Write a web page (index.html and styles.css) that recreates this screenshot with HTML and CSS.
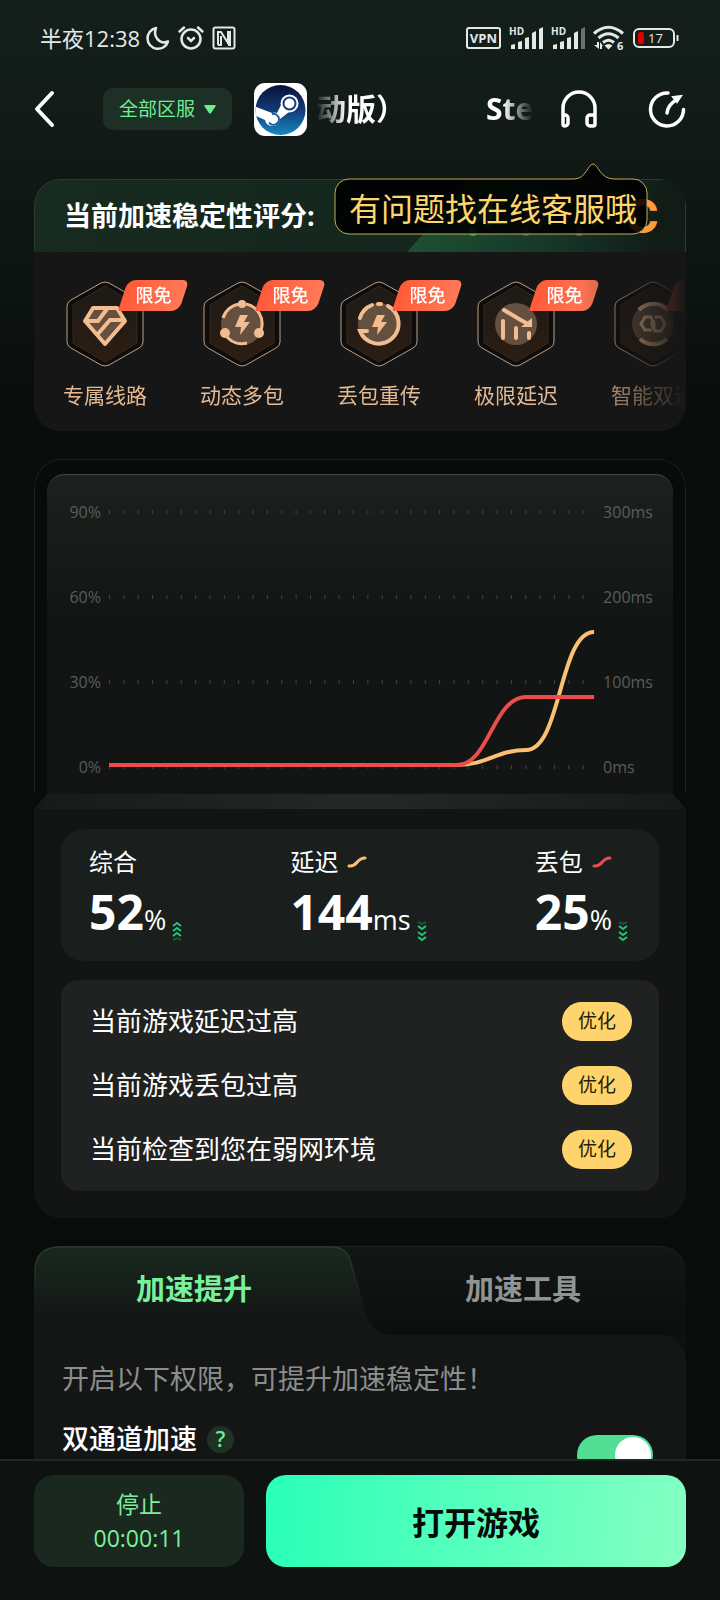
FILE: index.html
```html
<!DOCTYPE html>
<html lang="zh-CN">

<head>
    <meta charset="UTF-8">
    <meta name="viewport" content="width=device-width, initial-scale=1.0">
    <title>游戏加速</title>
    <link rel="stylesheet" href="styles.css">
</head>

<body>
    <div class="statusbar">
        <div class="status-left">
            <span class="clock">半夜12:38</span>
            <svg width="24" height="24" viewBox="0 0 24 24" fill="none" stroke="#e4e8e6" stroke-width="2.500" stroke-linejoin="round"><path d="M10 2A10.500 10.500 0 1 0 22 15.500C14 19 6.500 11 10 2Z"/></svg>
            <svg class="alarm" width="26" height="24" viewBox="0 0 26 24" fill="none" stroke="#e4e8e6" stroke-width="2.500" stroke-linecap="round"><circle cx="13" cy="13" r="9.500"/><path d="M1.500 5.500 6 1.500M24.500 5.500 20 1.500M10 12l3 3 3-3"/></svg>
            <svg width="24" height="24" viewBox="0 0 24 24" fill="none" stroke="#e4e8e6" stroke-width="2"><rect x="1.500" y="1.500" width="21" height="21" rx="2"/><path d="M6 19V6h3l7 11V6h2v13h-2M6 19h3V10"/></svg>
        </div>
        <div class="status-right">
            <span class="vpn">VPN</span>
            <svg width="34" height="24" viewBox="0 0 34 24" fill="#e4e8e6"><text x="0" y="9" class="hd">HD</text><path d="M2 23v-4l4-1v5zM9 23v-7l4-1v8zM16 23V12l4-1v12zM23 23V7l4-2v18zM30 23V3l4-2v22z"/></svg>
            <svg width="34" height="24" viewBox="0 0 34 24" fill="#e4e8e6"><text x="0" y="9" class="hd">HD</text><path d="M2 23v-4l4-1v5zM9 23v-7l4-1v8zM16 23V12l4-1v12zM23 23V7l4-2v18z"/><path fill="#6a706d" d="M30 23V3l4-2v22z"/></svg>
            <svg width="32" height="26" viewBox="0 0 32 26" fill="none" stroke="#e4e8e6" stroke-width="3"><path d="M1 8.500Q15.500-4 30 8.500M5.500 13Q15.500 4.500 25.500 13M10 17.500Q15.500 13 21 17.500"/><path fill="#e4e8e6" stroke="none" d="M11.500 20.500q4-3 8 0l-4 4zM1 20h3v-3h2v7zM7 17l3 4H9v3H7z"/><text x="24" y="25" class="wifi6">6</text></svg>
            <svg width="46" height="22" viewBox="0 0 46 22" fill="none"><rect x="1" y="2" width="40" height="18" rx="5" stroke="#e4e8e6" stroke-width="2"/><rect x="5" y="5" width="6" height="12" rx="2" fill="#e00000"/><path d="M44.500 8v6" stroke="#e4e8e6" stroke-width="2"/><text x="15" y="16" class="batt">17</text></svg>
        </div>
    </div>

    <header class="header">
        <button class="icon-btn" type="button" aria-label="返回">
            <svg width="20" height="38" viewBox="0 0 20 38" fill="none" stroke="#fff" stroke-width="4" stroke-linecap="round" stroke-linejoin="round"><path d="M18 3 3 19l15 16"/></svg>
        </button>
        <button class="region" type="button">全部区服
            <svg width="12" height="9" viewBox="0 0 12 9" fill="#6bef92"><path d="M1 0h10q1 0 .500 1.500L7 8q-1 1-2 0L.500 1.500Q0 0 1 0Z"/></svg>
        </button>
        <svg class="game-icon" width="53" height="53" viewBox="0 0 53 53">
            <defs>
                <linearGradient id="steam" x1="0" y1="0" x2="0" y2="1">
                    <stop offset="0" stop-color="#0b1038"/>
                    <stop offset=".5" stop-color="#123a78"/>
                    <stop offset="1" stop-color="#1689bd"/>
                </linearGradient>
                <clipPath id="disc"><circle cx="26.500" cy="27" r="25"/></clipPath>
            </defs>
            <rect width="53" height="53" rx="11" fill="#fff"/>
            <circle cx="26.500" cy="27" r="25" fill="url(#steam)"/>
            <g clip-path="url(#disc)">
                <path d="M0 23 18 30Q21 29 23 30L27 22Q27 12 35 12A8.500 8.500 0 1 1 35 29L26 36Q25 43 19 43Q12 43 11 37L0 32Z" fill="#fff"/>
            </g>
            <circle cx="35.500" cy="20.500" r="9" fill="#fff"/>
            <circle cx="35.500" cy="20.500" r="6" fill="#fff" stroke="#173d76" stroke-width="2"/>
            <path d="M15 39.500A5.500 5.500 0 1 0 18 31" fill="none" stroke="#195c98" stroke-width="2"/>
        </svg>
        <div class="marquee"><span>动版）</span><span>Ste</span></div>
        <button class="icon-btn" type="button" aria-label="在线客服">
            <svg width="38" height="38" viewBox="0 0 38 38" fill="none" stroke="#fff" stroke-width="3.500" stroke-linejoin="round"><path d="M3 34V18a16 16 0 0 1 32 0v16a2 2 0 0 1-2 2h-3a3 3 0 0 1-3-3v-5a3 3 0 0 1 3-3h5M3 25h2a3 3 0 0 1 3 3v5a3 3 0 0 1-3 3H5a2 2 0 0 1-2-2"/></svg>
        </button>
        <button class="icon-btn" type="button" aria-label="测速">
            <svg width="38" height="38" viewBox="0 0 38 38" fill="none" stroke="#fff" stroke-width="3.500" stroke-linecap="round"><path d="M20 3A16.500 16.500 0 1 0 35.500 19.500M19 23q1-8 9-13"/><path fill="#fff" stroke-width="2" d="m25 7 8-1-4 6z"/></svg>
        </button>
        <div class="tooltip">
            <svg viewBox="0 0 314 72" fill="rgba(0,0,0,.88)" stroke="#c5a85a"><path d="M15 16H240C252 16 254 1 259 1S266 16 280 16H299A14 14 0 0 1 313 30V57A14 14 0 0 1 299 71H15A14 14 0 0 1 1 57V30A14 14 0 0 1 15 16Z"/></svg>
            <span>有问题找在线客服哦</span>
        </div>
    </header>

    <main>
        <section class="score">
            <div class="score-head">
                <h2>当前加速稳定性评分:</h2>
                <div class="medals">
                    <svg width="26" height="40" viewBox="0 0 26 40" fill="#2c9a51"><path d="M3 16Q12-2 23 3q4 12-3 28h-4q4-8 2-14-5 8-13 12z"/><circle cx="4" cy="36" r="4"/></svg>
                    <svg width="26" height="40" viewBox="0 0 26 40" fill="#535b56"><path d="M3 16Q12-2 23 3q4 12-3 28h-4q4-8 2-14-5 8-13 12z"/><circle cx="4" cy="36" r="4"/></svg>
                    <svg width="26" height="40" viewBox="0 0 26 40" fill="#535b56"><path d="M3 16Q12-2 23 3q4 12-3 28h-4q4-8 2-14-5 8-13 12z"/><circle cx="4" cy="36" r="4"/></svg>
                </div>
                <span class="grade">C</span>
            </div>
            <!-- 横向滚动的功能列表 -->
            <div class="features">
                <div class="feature">
                    <div class="hex">
                        <svg viewBox="0 0 78 86"><use href="#hexagon"/>
                            <path d="M27 27h24l8 13-20 23-20-23z" fill="#65503f" stroke="#f3bd92" stroke-width="4" stroke-linejoin="round"/>
                            <path d="M20 40h12l9-12M57 39H44L31 54" fill="none" stroke="#f3bd92" stroke-width="4"/></svg>
                        <span class="free">限免</span>
                    </div>
                    <p>专属线路</p>
                </div>
                <div class="feature">
                    <div class="hex">
                        <svg viewBox="0 0 78 86"><use href="#hexagon"/>
                            <circle cx="39" cy="43" r="21" fill="#65503f"/>
                            <path d="M20 37a20 20 0 0 1 17-14M43 23a20 20 0 0 1 15 26M24 56a20 20 0 0 0 20 6" fill="none" stroke="#f3bd92" stroke-width="3"/>
                            <g fill="#f3bd92"><circle cx="39" cy="23" r="4"/><circle cx="22" cy="52" r="5"/><circle cx="56" cy="52" r="5"/><path d="m37 34-5 12h6l-1 8 10-13h-6l4-7z"/></g></svg>
                        <span class="free">限免</span>
                    </div>
                    <p>动态多包</p>
                </div>
                <div class="feature">
                    <div class="hex">
                        <svg viewBox="0 0 78 86"><use href="#hexagon"/>
                            <circle cx="39" cy="43" r="21" fill="#65503f"/>
                            <path d="M20 37a20 20 0 0 1 12-13M38 23h3M48 25A20 20 0 1 1 20 50h7" fill="none" stroke="#f3bd92" stroke-width="4" stroke-linecap="round"/>
                            <path d="m37 34-5 12h6l-1 8 10-13h-6l4-7z" fill="#f3bd92"/></svg>
                        <span class="free">限免</span>
                    </div>
                    <p>丢包重传</p>
                </div>
                <div class="feature">
                    <div class="hex">
                        <svg viewBox="0 0 78 86"><use href="#hexagon"/>
                            <circle cx="39" cy="43" r="21" fill="#65503f"/>
                            <path d="m27 29 15 9 9 5M26 40v17M39 47v10M52 52v5" fill="none" stroke="#f3bd92" stroke-width="4" stroke-linecap="round"/>
                            <path d="M55 37v9H44z" fill="#f3bd92"/></svg>
                        <span class="free">限免</span>
                    </div>
                    <p>极限延迟</p>
                </div>
                <div class="feature">
                    <div class="hex">
                        <svg viewBox="0 0 78 86"><use href="#hexagon"/>
                            <circle cx="39" cy="43" r="21" fill="#65503f"/>
                            <path d="M25 29a20 20 0 0 1 29 0M26 58a20 20 0 0 0 27 0" fill="none" stroke="#f3bd92" stroke-width="4"/>
                            <path d="M38 49h-7l-4-6 4-7h6l3 6v6M41 36h6l4 7-4 7h-6l-3-6v-4" fill="none" stroke="#f3bd92" stroke-width="3"/></svg>
                        <span class="free">限免</span>
                    </div>
                    <p>智能双通</p>
                </div>
            </div>
        </section>

        <section class="monitor">
            <div class="frame">
                <div class="chart">
                    <div class="axis axis-left"><span>90%</span><span>60%</span><span>30%</span><span>0%</span></div>
                    <svg class="plot" viewBox="0 0 485 276" preserveAspectRatio="none" fill="none">
                        <g stroke="#3f4341" stroke-width="4" stroke-dasharray="1 13.350">
                            <path d="M0 10H475M0 95H475M0 180H475M0 265H475"/>
                        </g>
                        <path d="M0 263H348C378 263 388 248 417 248C452 248 450 130 485 130" stroke="#fbc072" stroke-width="4"/>
                        <path d="M0 263H348C380 263 384 195 417 195H485" stroke="#ee4b4b" stroke-width="4"/>
                    </svg>
                    <div class="axis"><span>300ms</span><span>200ms</span><span>100ms</span><span>0ms</span></div>
                </div>
            </div>
            <div class="ledge"></div>
            <div class="monitor-body">
                <div class="stats">
                    <div class="stat">
                        <div class="stat-name">综合</div>
                        <div class="stat-value"><b>52</b><span>%</span>
                            <svg width="10" height="20" viewBox="0 0 10 20" fill="none" stroke="#20c873" stroke-width="2"><path d="m1 5 4-3 4 3M1 10l4-3 4 3M1 15l4-3 4 3"/><path d="m1 19 4-2 4 2" opacity=".3"/></svg>
                        </div>
                    </div>
                    <div class="stat">
                        <div class="stat-name">延迟
                            <svg width="20" height="12" viewBox="0 0 20 12" fill="none" stroke="#fbc072" stroke-width="3" stroke-linecap="round"><path d="M2 10C11 11 9 2 18 2"/></svg>
                        </div>
                        <div class="stat-value"><b>144</b><span>ms</span>
                            <svg width="10" height="20" viewBox="0 0 10 20" fill="none" stroke="#20c873" stroke-width="2"><path d="m1 5 4 3 4-3M1 11l4 3 4-3M1 16l4 3 4-3"/><path d="m1 1 4 2 4-2" opacity=".3"/></svg>
                        </div>
                    </div>
                    <div class="stat">
                        <div class="stat-name">丢包
                            <svg width="20" height="12" viewBox="0 0 20 12" fill="none" stroke="#ee4b4b" stroke-width="3" stroke-linecap="round"><path d="M2 10C11 11 9 2 18 2"/></svg>
                        </div>
                        <div class="stat-value"><b>25</b><span>%</span>
                            <svg width="10" height="20" viewBox="0 0 10 20" fill="none" stroke="#20c873" stroke-width="2"><path d="m1 5 4 3 4-3M1 11l4 3 4-3M1 16l4 3 4-3"/><path d="m1 1 4 2 4-2" opacity=".3"/></svg>
                        </div>
                    </div>
                </div>
                <ul class="issues">
                    <li>当前游戏延迟过高<button type="button">优化</button></li>
                    <li>当前游戏丢包过高<button type="button">优化</button></li>
                    <li>当前检查到您在弱网环境<button type="button">优化</button></li>
                </ul>
            </div>
        </section>

        <section class="boost">
            <div class="tabs">
                <svg class="tab-shape" viewBox="0 0 652 89" preserveAspectRatio="none">
                    <defs>
                        <linearGradient id="tabfill" x1="0" y1="0" x2="0" y2="1">
                            <stop offset="0" stop-color="#19291f"/>
                            <stop offset=".8" stop-color="#141615"/>
                        </linearGradient>
                        <linearGradient id="tabline" x1="0" y1="0" x2="0" y2="1">
                            <stop offset="0" stop-color="#324038"/>
                            <stop offset=".6" stop-color="#324038" stop-opacity="0"/>
                        </linearGradient>
                    </defs>
                    <path d="M0 89V26Q0 0 26 0H298Q313 0 317 14L332 68Q338 89 360 89Z" fill="url(#tabfill)"/>
                    <path d="M1 89V26Q1 1 26 1H298Q312 1 316 14L331 68" fill="none" stroke="url(#tabline)"/>
                </svg>
                <button class="tab active" type="button">加速提升</button>
                <button class="tab" type="button">加速工具</button>
            </div>
            <div class="boost-body">
                <p class="hint">开启以下权限，可提升加速稳定性！</p>
                <div class="option">
                    <label for="dual">双通道加速</label>
                    <button class="help" type="button">?</button>
                    <input type="checkbox" id="dual" class="switch" checked>
                </div>
            </div>
        </section>
    </main>

    <footer class="footer">
        <button class="stop" type="button"><span>停止</span><span>00:00:11</span></button>
        <button class="open" type="button">打开游戏</button>
    </footer>

    <!-- 功能图标共用的六边形 -->
    <svg width="0" height="0" class="defs">
        <defs>
            <linearGradient id="hexfill" x1="0" y1="0" x2="0" y2="1">
                <stop offset="0" stop-color="#1d1a17"/>
                <stop offset="1" stop-color="#2c1d12"/>
            </linearGradient>
            <g id="hexagon">
                <path d="M35 2q4-2 8 0l30 17q4 2 4 6v36q0 4-4 6L43 84q-4 2-8 0L5 67q-4-2-4-6V25q0-4 4-6z" fill="#0f0d0c" stroke="#b9a089"/>
                <path d="M39 5 71 24v38L39 81 7 62V24z" fill="url(#hexfill)" stroke="#33291f"/>
            </g>
        </defs>
    </svg>
</body>

</html>
```

FILE: styles.css
```css
* {
    box-sizing: border-box;
}

body {
    margin: 0;
    height: 100vh;
    display: flex;
    flex-direction: column;
    overflow: hidden;
    font-family: "Open Sans", "Noto Sans CJK SC", sans-serif;
    color: #fff;
    background: linear-gradient(#141f1b 0, #111a17 140px, #080c0b 440px, #090c0b 100%);
}

button {
    border: none;
    padding: 0;
    background: none;
    color: inherit;
    font-family: inherit;
}

svg {
    display: block;
    flex-shrink: 0;
    overflow: visible;
}

h2,
p,
ul {
    margin: 0;
    padding: 0;
}

.defs {
    position: absolute;
}

/* status bar */
.statusbar {
    height: 76px;
    flex-shrink: 0;
    display: flex;
    justify-content: space-between;
    align-items: center;
    padding: 0 41px 0 40px;
    color: #e4e8e6;
}

.status-left,
.status-right {
    display: flex;
    align-items: center;
    gap: 8px;
}

.status-left {
    gap: 6px;
}

.clock {
    font-size: 22px;
    line-height: 28px;
}

.alarm {
    margin: 0 2px;
}

.vpn {
    height: 22px;
    padding: 0 2px;
    border: 2px solid #e4e8e6;
    border-radius: 3px;
    font-size: 13px;
    font-weight: 700;
    line-height: 18px;
}

.hd {
    font-size: 10px;
    font-weight: 700;
}

.wifi6 {
    font-size: 11px;
    fill: #e4e8e6;
    stroke: none;
    font-weight: 700;
}

.batt {
    font-size: 13px;
    fill: #e4e8e6;
}

/* header */
.header {
    position: relative;
    z-index: 2;
    height: 66px;
    flex-shrink: 0;
    display: flex;
    align-items: center;
    padding: 0 34px;
}

.region {
    display: flex;
    align-items: center;
    justify-content: center;
    gap: 9px;
    width: 129px;
    height: 42px;
    margin: 0 22px 0 49px;
    border-radius: 10px;
    background: #1d3026;
    color: #6bef92;
    font-size: 19px;
    line-height: 28px;
}

.marquee {
    flex: 1;
    display: flex;
    gap: 80px;
    overflow: hidden;
    margin: 0 27px 0 9px;
    font-size: 30px;
    font-weight: 700;
    line-height: 40px;
    white-space: nowrap;
    -webkit-mask-image: linear-gradient(90deg, transparent, #000 30px, #000 calc(100% - 30px), transparent);
    mask-image: linear-gradient(90deg, transparent, #000 30px, #000 calc(100% - 30px), transparent);
}

.icon-btn + .icon-btn {
    margin-left: 50px;
}

.tooltip {
    position: absolute;
    top: 87px;
    right: 72px;
    width: 314px;
    height: 72px;
    padding: 18px 0 0 15px;
    color: #ffd66b;
    font-size: 32px;
    line-height: 56px;
    white-space: nowrap;
}

.tooltip svg {
    position: absolute;
    inset: 0;
}

.tooltip span {
    position: relative;
}

main {
    flex: 1;
    min-height: 0;
    overflow: hidden;
    display: flex;
    flex-direction: column;
    gap: 28px;
    padding: 37px 34px 0;
}

section {
    flex-shrink: 0;
}

/* score card */
.score {
    height: 252px;
    border-radius: 26px;
    background: #161616;
    overflow: hidden;
}

.score-head {
    position: relative;
    height: 73px;
    display: flex;
    align-items: center;
    padding: 0 26px 0 29px;
    border: 1px solid #2c3b33;
    border-bottom: none;
    border-radius: 26px 26px 0 0;
    background: linear-gradient(90deg, #172b20, #14261d 60%, #101a16);
}

.score-head::before {
    content: "";
    position: absolute;
    top: 0;
    right: 0;
    bottom: 0;
    width: 278px;
    clip-path: polygon(64px 0, 100% 0, 100% 100%, 0 100%);
    background: linear-gradient(100deg, #1e5233, #17392a 50%, #111c17 90%);
}

.score-head h2 {
    font-size: 27px;
    line-height: 40px;
    white-space: nowrap;
}

.medals {
    position: relative;
    display: flex;
    gap: 27px;
    margin-left: auto;
}

.grade {
    position: relative;
    margin-left: 24px;
    color: #ff9d3c;
    font-family: Inter, sans-serif;
    font-size: 46px;
    font-weight: 700;
    line-height: 56px;
}

.features {
    display: flex;
    gap: 51px;
    padding: 29px 0 0 28px;
    -webkit-mask-image: linear-gradient(90deg, #000 84%, transparent);
    mask-image: linear-gradient(90deg, #000 84%, transparent);
}

.feature {
    width: 86px;
    flex-shrink: 0;
}

.hex {
    position: relative;
    width: 78px;
    height: 86px;
    margin: 0 4px;
}

.free {
    position: absolute;
    top: -1px;
    left: 52px;
    width: 71px;
    height: 31px;
    color: #fff;
    font-size: 18px;
    font-weight: 500;
    line-height: 31px;
    text-align: center;
    z-index: 1;
}

.free::before {
    content: "";
    position: absolute;
    inset: 0 5px;
    z-index: -1;
    border-radius: 8px 6px 8px 2px;
    background: linear-gradient(90deg, #ff5a38, #ff7a58);
    transform: skewX(-18deg);
}

.feature p {
    margin-top: 14px;
    color: #e3b994;
    font-size: 21px;
    line-height: 28px;
    text-align: center;
    white-space: nowrap;
}

/* monitor card */
.frame {
    padding: 14px 12px 0;
    border: 1px solid #18211d;
    border-bottom: none;
    border-radius: 28px 28px 0 0;
    background: #070b09;
}

.chart {
    height: 320px;
    display: flex;
    align-items: flex-start;
    padding: 27px 20px 0 20px;
    border-top: 1px solid #414845;
    border-radius: 18px 18px 0 0;
    background: linear-gradient(#1b211e, #121514 45%);
}

.axis {
    height: 276px;
    display: flex;
    flex-direction: column;
    justify-content: space-between;
    color: #595d5b;
    font-size: 16px;
    line-height: 21px;
}

.axis-left {
    width: 34px;
    align-items: flex-end;
}

.plot {
    flex: 1;
    min-width: 0;
    height: 276px;
    margin: 0 9px 0 8px;
}

.ledge {
    height: 15px;
    clip-path: polygon(13px 0, calc(100% - 13px) 0, 100% 100%, 0 100%);
    background: linear-gradient(90deg, #181a19, #262827 50%, #181a19);
}

.monitor-body {
    padding: 20px 27px 27px;
    border-radius: 0 0 26px 26px;
    background: #131514;
}

.stats {
    height: 132px;
    display: flex;
    justify-content: space-between;
    padding: 15px 31px 0 28px;
    border-radius: 22px;
    background: #1a1f1d;
}

.stat-name {
    display: flex;
    align-items: center;
    gap: 9px;
    font-size: 24px;
    line-height: 35px;
}

.stat-value {
    display: flex;
    align-items: baseline;
    line-height: 66px;
}

.stat-value b {
    font-size: 48px;
}

.stat-value span {
    font-size: 27px;
}

.stat-value svg {
    margin-left: 6px;
    align-self: flex-end;
    margin-bottom: 12px;
}

.issues {
    display: flex;
    flex-direction: column;
    gap: 25px;
    margin-top: 19px;
    padding: 22px 27px 22px 29px;
    border-radius: 18px;
    background: #202221;
    list-style: none;
    font-size: 26px;
}

.issues li {
    display: flex;
    justify-content: space-between;
    align-items: center;
    line-height: 39px;
}

.issues button {
    width: 70px;
    height: 39px;
    border-radius: 20px;
    background: #ffd46c;
    color: #2b1d05;
    font-size: 19px;
    line-height: 39px;
}

/* tabs */
.boost {
    border-radius: 26px 26px 0 0;
    background: #0d1110;
}

.tabs {
    position: relative;
    height: 89px;
    display: grid;
    grid-template-columns: 1fr 1fr;
    border-top: 1px solid #1e2321;
    border-radius: 26px 26px 0 0;
    background: linear-gradient(#121615, #0b0e0d);
}

.tab-shape {
    position: absolute;
    top: -1px;
    left: 0;
    width: 100%;
    height: 89px;
}

.tab {
    position: relative;
    padding-bottom: 4px;
    color: #929493;
    font-size: 29px;
    font-weight: 700;
    line-height: 40px;
}

.active {
    color: #77f29a;
    padding-right: 6px;
}

.boost-body {
    padding: 24px 28px;
    border-radius: 0 26px 0 0;
    background: #141615;
}

.hint {
    color: #8c8e8d;
    font-size: 27px;
    line-height: 40px;
}

.option {
    height: 76px;
    display: flex;
    align-items: center;
    padding-top: 4px;
    font-size: 27px;
    font-weight: 500;
    line-height: 40px;
}

.help {
    width: 27px;
    height: 27px;
    margin: 0 auto 0 10px;
    border-radius: 50%;
    background: #1f3325;
    color: #6bef92;
    font-size: 21px;
    font-weight: 600;
    line-height: 27px;
}

.switch {
    appearance: none;
    align-self: flex-end;
    flex-shrink: 0;
    width: 76px;
    height: 40px;
    margin: 0 5px 0 0;
    border-radius: 20px;
    background: #3a3d3b;
}

.switch:checked {
    background: #52df94;
}

.switch::after {
    content: "";
    display: block;
    width: 36px;
    height: 36px;
    margin: 2px;
    border-radius: 50%;
    background: #fff;
}

.switch:checked::after {
    margin-left: 38px;
}

/* bottom bar */
.footer {
    position: relative;
    flex-shrink: 0;
    height: 141px;
    display: flex;
    align-items: flex-start;
    gap: 22px;
    padding: 14px 34px 0;
    border-top: 2px solid #222725;
    background: #0e1211;
}

.stop {
    flex: 1;
    height: 92px;
    display: flex;
    flex-direction: column;
    align-items: center;
    justify-content: center;
    border-radius: 20px;
    background: #1a281f;
    color: #7bf09c;
    font-size: 23px;
    line-height: 34px;
}

.open {
    flex: 2 0 0;
    height: 92px;
    border-radius: 20px;
    background: linear-gradient(95deg, #2affb8, #84ffc2);
    color: #050b08;
    font-size: 32px;
    font-weight: 700;
}
```
